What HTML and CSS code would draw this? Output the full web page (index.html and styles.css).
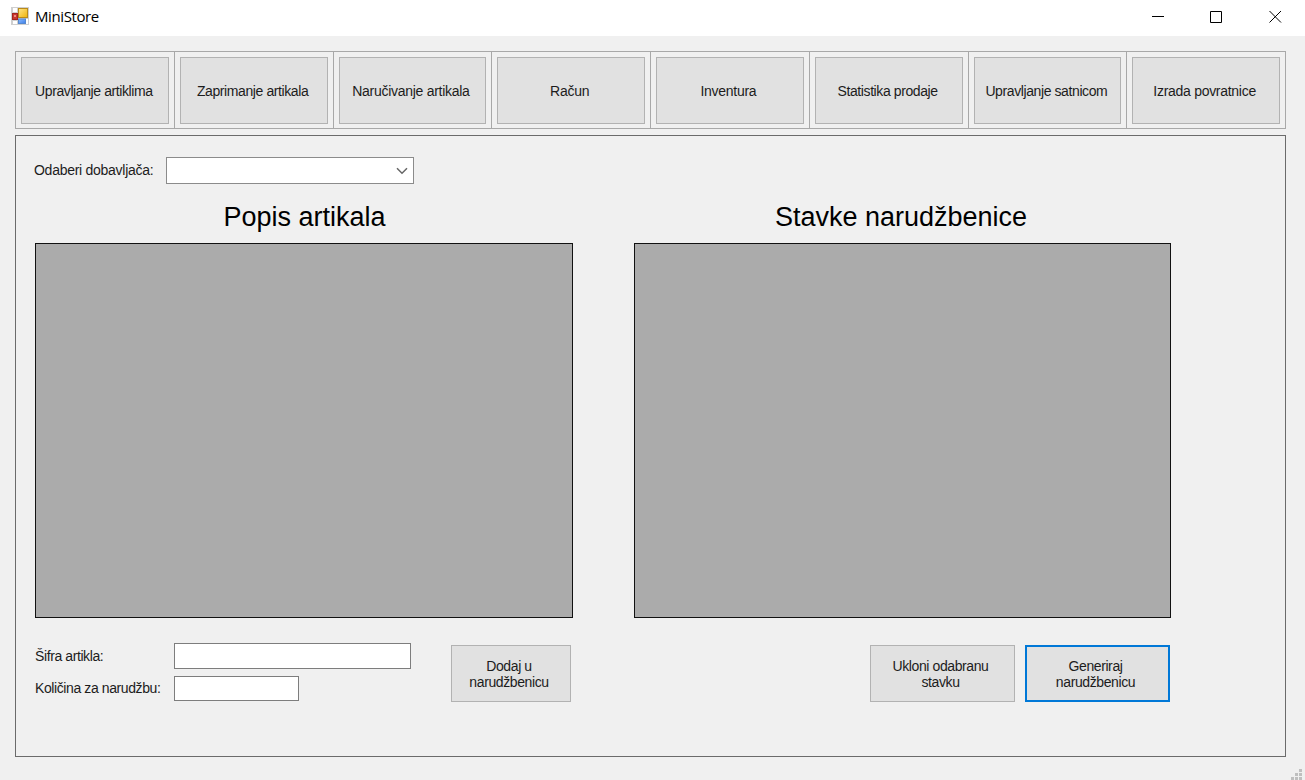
FILE: index.html
```html
<!DOCTYPE html>
<html lang="hr">
<head>
<meta charset="utf-8">
<title>MiniStore</title>
<link rel="stylesheet" href="styles.css">
</head>
<body>
<div class="window">
  <header class="titlebar">
    <svg class="app-icon" width="18" height="18" viewBox="0 0 18 18">
      <defs>
        <linearGradient id="gold" x1="0" y1="0" x2="1" y2="1"><stop offset="0" stop-color="#ffe58a"/><stop offset="1" stop-color="#eeb308"/></linearGradient>
        <linearGradient id="blue" x1="0" y1="0" x2="1" y2="1"><stop offset="0" stop-color="#8dbcff"/><stop offset="1" stop-color="#3b7de8"/></linearGradient>
      </defs>
      <rect width="18" height="18" fill="#cfcfcf"/>
      <path fill="#fff" d="M2 1h4v4H2zM2 14h4v3H2zM15 12h2v5h-2z"/>
      <rect x="7.5" y="1.5" width="9" height="9" fill="url(#gold)" stroke="#b98a1b"/>
      <rect x="1.5" y="6.5" width="5" height="6" fill="#c8372f" stroke="#a3251e"/>
      <rect x="3" y="8" width="2" height="2" fill="#ee8c80"/>
      <rect x="7.5" y="12" width="7" height="4.5" fill="url(#blue)" stroke="#5588cf"/>
    </svg>
    <span class="title">MiniStore</span>
    <div class="controls">
      <svg width="13" height="13" viewBox="0 0 13 13"><path d="M0 6.5h12"/></svg>
      <svg width="13" height="13" viewBox="0 0 13 13"><path d="M.5 1.5h11v11H.5z"/></svg>
      <svg width="13" height="13" viewBox="0 0 13 13"><path d="M.5 1l11.5 11.5M12 1L.5 12.5"/></svg>
    </div>
  </header>
  <main class="client">
    <nav class="menu">
      <div class="cell"><button class="btn">Upravljanje artiklima</button></div>
      <div class="cell"><button class="btn">Zaprimanje artikala</button></div>
      <div class="cell"><button class="btn loose">Naručivanje artikala</button></div>
      <div class="cell"><button class="btn loose">Račun</button></div>
      <div class="cell"><button class="btn loose">Inventura</button></div>
      <div class="cell"><button class="btn">Statistika prodaje</button></div>
      <div class="cell"><button class="btn">Upravljanje satnicom</button></div>
      <div class="cell"><button class="btn loose">Izrada povratnice</button></div>
    </nav>
    <section class="panel">
      <div class="supplier">
        <span class="label">Odaberi dobavljača:</span>
        <div class="combo"><svg width="12" height="8" viewBox="0 0 12 8"><path d="M1 1.2l5 5 5-5"/></svg></div>
      </div>
      <div class="columns">
        <div class="column">
          <h2>Popis artikala</h2>
          <div class="grid"></div>
          <div class="actions">
            <div class="fields">
              <label class="label">Šifra artikla:</label><input class="wide" type="text">
              <label class="label qty">Količina za narudžbu:</label><input class="short" type="text">
            </div>
            <button class="btn add">Dodaj u<br>narudžbenicu</button>
          </div>
        </div>
        <div class="column">
          <h2 class="order-title">Stavke narudžbenice</h2>
          <div class="grid"></div>
          <div class="actions right">
            <button class="btn">Ukloni odabranu<br>stavku</button>
            <button class="btn default">Generiraj<br>narudžbenicu</button>
          </div>
        </div>
      </div>
    </section>
    <svg class="grip" width="11" height="11" viewBox="0 0 11 11"><path d="M8 0h3v3H8zM4 4h3v3H4zM8 4h3v3H8zM0 8h3v3H0zM4 8h3v3H4zM8 8h3v3H8z"/></svg>
  </main>
</div>
</body>
</html>
```
FILE: styles.css
```css
* { box-sizing: border-box; }
body { margin: 0; overflow: hidden; font: 14px/16px "Liberation Sans", Arial, sans-serif; color: #1c1c1c; }
.window { height: 780px; display: flex; flex-direction: column; background: #f0f0f0; }
.titlebar { height: 36px; flex: none; background: #fff; display: flex; align-items: center; padding: 0 23px 4px 11px; }
.title { font: 15px/20px "Open Sans", "Noto Sans", sans-serif; letter-spacing: -.4px; margin-left: 6px; color: #000; }
.controls { margin-left: auto; display: flex; gap: 45px; }
.controls svg { fill: none; stroke: #000; }
.controls svg:last-child { margin-left: 1px; }
.client { position: relative; flex: 1; padding: 15px 19px 23px 15px; display: flex; flex-direction: column; gap: 6px; }
.menu { height: 78px; display: grid; grid-template-columns: repeat(8, 158.75px); border: solid #a8a8a8; border-width: 1px 1px 1px 0; width: 1271px; }
.cell { border-left: 1px solid #a8a8a8; padding: 5px 5px 4px; display: flex; }
.btn { font: inherit; letter-spacing: -.4px; color: #1c1c1c; background: #e1e1e1; border: 1px solid #b2b2b2; border-radius: 0; padding: 0 2px 0 0; }
.cell .btn { flex: 1; }
.cell .loose { letter-spacing: -.28px; padding-right: 3px; }
.panel { height: 622px; width: 1271px; border: 1px solid #6b6b6b; padding: 21px 0 0 18px; }
.supplier { display: flex; align-items: center; height: 27px; }
.label { letter-spacing: -.4px; white-space: nowrap; }
.supplier .label { width: 132px; letter-spacing: -.27px; padding-bottom: 2px; }
.qty { padding-bottom: 1px; }
.combo { width: 248px; height: 27px; background: #fff; border: 1px solid #8b8b8b; display: flex; justify-content: flex-end; align-items: center; padding-right: 5px; }
.combo svg { fill: none; stroke: #666; stroke-width: 1.5; }
.columns { display: flex; gap: 61px; padding-left: 1px; }
.column { width: 538px; }
.column:last-child { width: 537px; }
h2 { margin: 16px 0 8px; padding-left: 1px; font: 27px/35px "Liberation Sans", Arial, sans-serif; color: #000; text-align: center; }
.order-title { padding: 0 3px 0 0; }
.grid { height: 375px; border: 1px solid #111; background: #ababab; }
.actions { display: flex; padding-top: 25px; }
.fields { width: 416px; display: grid; grid-template-columns: 139px 1fr; row-gap: 7px; align-items: center; align-content: start; }
input { height: 25.5px; background: #fff; border: 1px solid #7d7d7d; padding: 0 4px; }
.wide { width: 237px; }
.short { width: 125px; }
.actions .btn { width: 145px; height: 57px; margin-top: 2px; padding-right: 4px; }
.actions .add { width: 120px; }
.right { justify-content: flex-end; gap: 10px; padding-right: 1px; }
.actions .default { border: 2px solid #0078d7; }
.grip { position: absolute; right: 3px; bottom: 0; fill: #bfbfbf; }
```
